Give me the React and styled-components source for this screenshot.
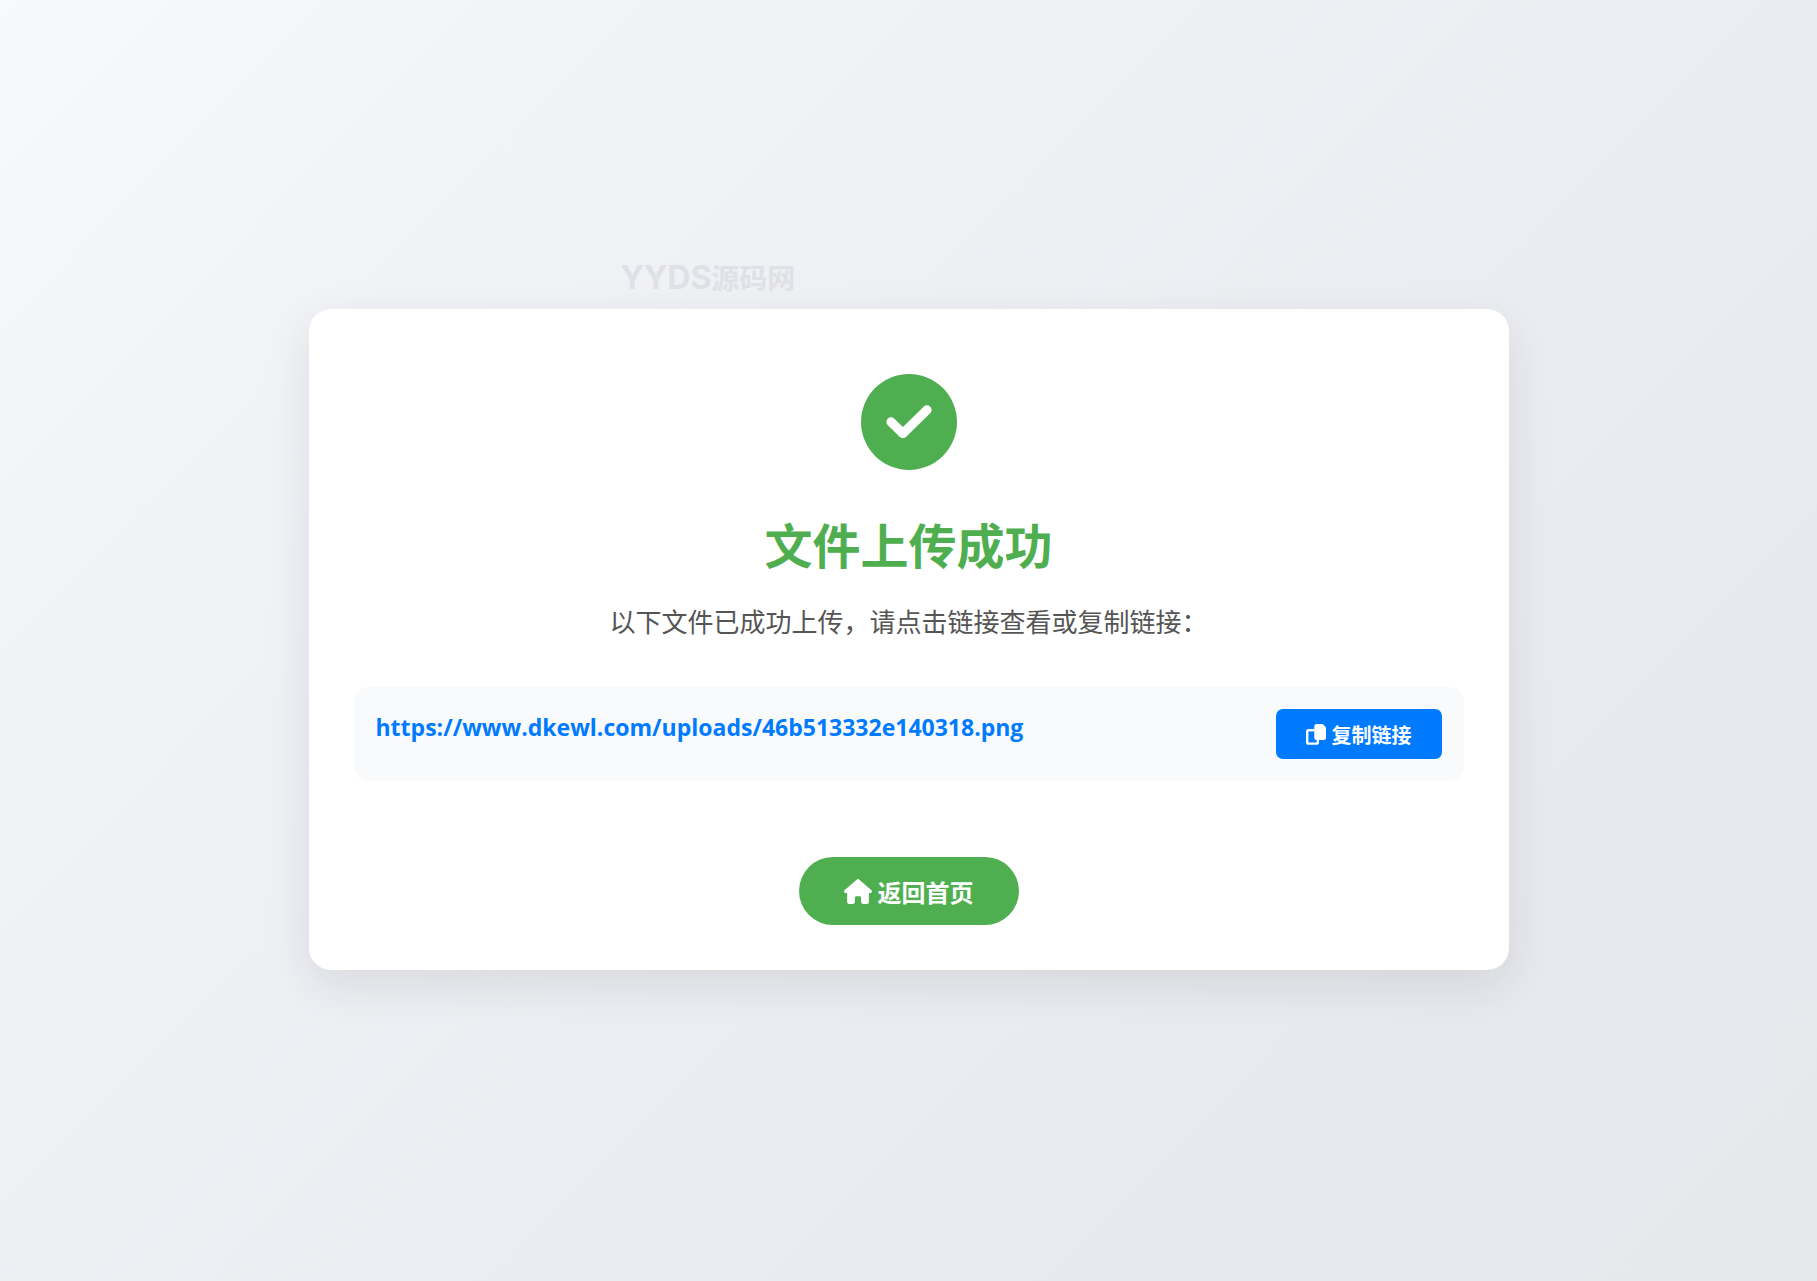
import React, { useState } from 'react';
import styled, { createGlobalStyle } from 'styled-components';
import { FaHouse } from 'react-icons/fa6';

const fileLink = "https://www.dkewl.com/uploads/46b513332e140318.png";

const GlobalStyle = createGlobalStyle`
    * {
        box-sizing: border-box;
    }
    body {
        margin: 0;
        font-family: "Open Sans", "Noto Sans CJK SC", sans-serif;
        background: #e8e9ee;
    }
`

function CheckIcon()
{
    return(
        <CheckSvg viewBox="0 0 48 48" aria-hidden="true">
            <path
                d="M6.1 24L17.9 35.500L41.900 12"
                fill="none"
                stroke="currentColor"
                strokeWidth="9.4"
                strokeLinecap="round"
                strokeLinejoin="round"/>
        </CheckSvg>
    )
}

function CopyIcon()
{
    return(
        <CopySvg viewBox="0 0 20 21" aria-hidden="true">
            <path
                d="M8.500 6.200H2.600Q1.200 6.200 1.200 7.600V18.200Q1.200 19.600 2.600 19.600H10.400Q11.800 19.600 11.800 18.200V15"
                fill="none"
                stroke="currentColor"
                strokeWidth="2.4"/>
            <path
                d="M10.800 0H15.800Q16.600 0 17.200 0.600L19.400 2.800Q20 3.400 20 4.200V13.500Q20 16 17.500 16H10.800Q8.300 16 8.300 13.500V2.500Q8.300 0 10.800 0Z"
                fill="currentColor"/>
        </CopySvg>
    )
}

export default function App()
{
    const [copied, setCopied] = useState(false);

    function handleCopy()
    {
        if (navigator.clipboard)
        {
            navigator.clipboard.writeText(fileLink).then(() => setCopied(true)).catch(() => {});
        }
    }

    return(
        <Page>
            <GlobalStyle/>

            <Card>
                <Watermark>YYDS<WatermarkName>源码网</WatermarkName></Watermark>

                <Badge>
                    <CheckIcon/>
                </Badge>

                <Title>文件上传成功</Title>
                <Message>以下文件已成功上传，请点击链接查看或复制链接：</Message>

                <FileRow>
                    <FileLink href={fileLink} target="_blank">{fileLink}</FileLink>
                    <CopyButton type="button" onClick={handleCopy}>
                        <CopyIcon/>
                        {copied ? "已复制" : "复制链接"}
                    </CopyButton>
                </FileRow>

                <HomeLink href="/">
                    <HomeIcon/>
                    返回首页
                </HomeLink>
            </Card>
        </Page>
    )
}

const Page = styled.div`
    display: flex;
    align-items: center;
    justify-content: center;
    min-height: 100vh;
    padding: 24px 24px 26px;
    background: linear-gradient(135deg, #f8f9fa 0%, #f2f3f7 20%, #e8e9ee 80%, #e6e8ec 100%);
`

const Card = styled.main`
    position: relative;
    display: flex;
    flex-direction: column;
    align-items: center;
    width: 100%;
    max-width: 1200px;
    padding: 65px 45px 45px;
    border-radius: 22px;
    background: #fff;
    box-shadow: 0 15px 45px rgba(20, 40, 50, 0.1);
`

const Watermark = styled.span`
    position: absolute;
    bottom: 100%;
    left: 26%;
    padding-bottom: 10px;
    font-family: Inter, "Noto Sans CJK SC", sans-serif;
    font-size: 32px;
    font-weight: 700;
    line-height: 40px;
    white-space: nowrap;
    color: #dfe1e6;
`

const WatermarkName = styled.span`
    font-size: 28px;
`

const Badge = styled.div`
    display: flex;
    align-items: center;
    justify-content: center;
    width: 96px;
    height: 96px;
    border-radius: 50%;
    background: #4faf50;
    color: #fff;
`

const CheckSvg = styled.svg`
    width: 48px;
    height: 48px;
`

const Title = styled.h1`
    margin: 44px 0 0;
    font-size: 48px;
    font-weight: 700;
    line-height: 64px;
    color: #4faf50;
`

const Message = styled.p`
    margin: 24px 0 45px;
    font-size: 26px;
    line-height: 40px;
    color: #555;
`

const FileRow = styled.div`
    display: flex;
    align-items: flex-start;
    justify-content: space-between;
    gap: 22px;
    width: 100%;
    padding: 22px;
    border-radius: 15px;
    background: #f9fafc;
`

const FileLink = styled.a`
    min-width: 0;
    font-size: 23px;
    font-weight: 700;
    line-height: 36px;
    color: #007bff;
    text-decoration: none;
    overflow-wrap: anywhere;
`

const CopySvg = styled.svg`
    width: 20px;
    height: 21px;
`

const CopyButton = styled.button`
    display: flex;
    flex-shrink: 0;
    align-items: center;
    gap: 6px;
    height: 50px;
    padding: 0 30px;
    border: none;
    border-radius: 7px;
    background: #007bff;
    color: #fff;
    font-family: inherit;
    font-size: 20px;
    font-weight: 700;
    cursor: pointer;
`

const HomeIcon = styled(FaHouse)`
    width: 28px;
    height: 25px;
`

const HomeLink = styled.a`
    display: flex;
    align-items: center;
    gap: 6px;
    height: 68px;
    margin-top: 76px;
    padding: 0 45px;
    border-radius: 34px;
    background: #4faf50;
    color: #fff;
    font-size: 24px;
    font-weight: 700;
    text-decoration: none;
`
